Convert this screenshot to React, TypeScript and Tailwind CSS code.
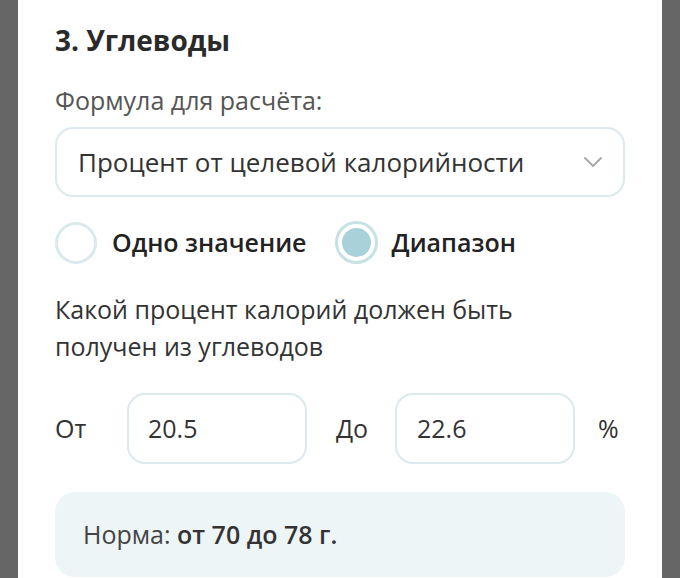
import React from "react";

export default function App() {
  return (
    <div className="w-[680px] h-[578px] bg-[#666666] flex justify-center overflow-hidden" style={{ fontFamily: '"Open Sans", sans-serif' }}>
      <div className="w-[644px] h-full bg-white pl-[37px] pr-[37px] pt-[20px] flex flex-col">
        <h2 className="text-[28px] leading-[40px] font-bold text-[#2a2a2a]">3. Углеводы</h2>
        <div className="mt-[25px] text-[25px] leading-[30px] text-[#555555]">Формула для расчёта:</div>
        <div className="mt-[12px] h-[70px] shrink-0 rounded-[18px] border-2 border-[#dce9ed] flex items-center justify-between pl-[21px] pr-[20px]">
          <span className="text-[26px] text-[#333333]">Процент от целевой калорийности</span>
          <svg width="20" height="12" viewBox="0 0 20 12" fill="none">
            <path d="M2 2 L10 10 L18 2" stroke="#a8a8a8" strokeWidth="2" strokeLinecap="round" strokeLinejoin="round" />
          </svg>
        </div>
        <div className="mt-[24px] flex items-center">
          <div className="w-[42px] h-[42px] rounded-full border-[3px] border-[#dbe9ec]" />
          <span className="ml-[15px] text-[25px] font-semibold text-[#222222]">Одно значение</span>
          <div className="ml-[28px] w-[43px] h-[43px] rounded-full border-[3px] border-[#c8e1e5] flex items-center justify-center">
            <div className="w-[29px] h-[29px] rounded-full bg-[#a9d1d9]" />
          </div>
          <span className="ml-[14px] text-[25px] font-semibold text-[#222222]">Диапазон</span>
        </div>
        <p className="mt-[27px] text-[25px] leading-[37px] text-[#333333]">
          Какой процент калорий должен быть
          <br />
          получен из углеводов
        </p>
        <div className="mt-[28px] flex items-center">
          <span className="w-[72px] text-[25px] text-[#333333]">От</span>
          <div className="w-[180px] h-[71px] rounded-[18px] border-2 border-[#dce9ed] flex items-center pl-[19px] text-[25px] text-[#333333]">20.5</div>
          <span className="ml-[29px] w-[59px] text-[25px] text-[#333333]">До</span>
          <div className="w-[180px] h-[71px] rounded-[18px] border-2 border-[#dce9ed] flex items-center pl-[20px] text-[25px] text-[#333333]">22.6</div>
          <span className="ml-[23px] text-[25px] text-[#333333]">%</span>
        </div>
        <div className="mt-[28px] h-[85px] shrink-0 rounded-[20px] bg-[#eef5f7] flex items-center pl-[28px] text-[25px] text-[#444444]">
          <span>Норма: <span className="font-semibold text-[#333333]">от 70 до 78 г.</span></span>
        </div>
      </div>
    </div>
  );
}
